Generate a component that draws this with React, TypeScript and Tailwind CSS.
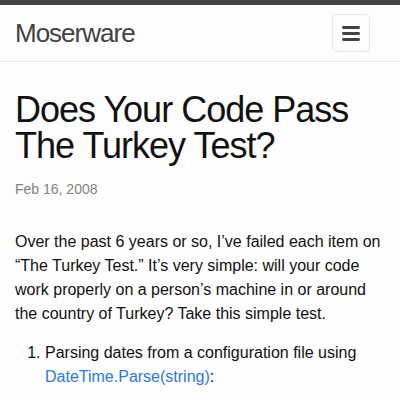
export default function App() {
  return (
    <div className="min-h-screen bg-[#fdfdfd] text-[#111] font-['Liberation_Sans',Arial,sans-serif] text-[16px] leading-[1.5]">
      <header className="border-t-[5px] border-b border-t-[#424242] border-b-[#e8e8e8] min-h-[56px]">
        <div className="px-[15px] flex items-center justify-between h-[56px]">
          <a href="#" className="text-[26px] leading-[54px] tracking-[-1px] text-[#424242]">
            Moserware
          </a>
          <button className="mr-[15px] w-[38px] h-[38px] border border-[#e8e8e8] rounded-[5px] bg-[#fdfdfd] flex items-center justify-center">
            <svg width="18" height="15" viewBox="0 0 18 15">
              <rect x="0" y="0" width="18" height="2.97" rx="1.48" fill="#424242" />
              <rect x="0" y="6.03" width="18" height="2.97" rx="1.48" fill="#424242" />
              <rect x="0" y="12.03" width="18" height="2.97" rx="1.48" fill="#424242" />
            </svg>
          </button>
        </div>
      </header>

      <main className="px-[15px] py-[30px]">
        <div className="mb-[30px]">
          <h1 className="text-[36px] leading-none tracking-[-1px] mb-[15px]">
            Does Your Code Pass The Turkey Test?
          </h1>
          <p className="text-[14px] text-[#828282]">Feb 16, 2008</p>
        </div>

        <p className="mb-[15px]">
          Over the past 6 years or so, I’ve failed each item on “The Turkey Test.” It’s very simple: will your code
          work properly on a person’s machine in or around the country of Turkey? Take this simple test.
        </p>

        <ol className="list-decimal ml-[30px]">
          <li>
            Parsing dates from a configuration file using{" "}
            <a href="#" className="text-[#2a7ae2]">DateTime.Parse(string)</a>:
          </li>
        </ol>
      </main>
    </div>
  );
}
